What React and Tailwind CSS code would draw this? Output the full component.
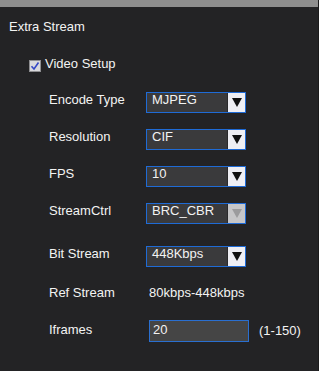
import React from "react";

function Arrow({ disabled }) {
  return (
    <div
      className={`w-[18px] h-full flex items-center justify-center border-l border-[#2a2a2c] ${
        disabled ? "bg-[#c6c6c8]" : "bg-[#efeff4]"
      }`}
    >
      <svg width="10" height="9" viewBox="0 0 10 9">
        <path d="M0 0 L10 0 L5 9 Z" fill={disabled ? "#9b9b9d" : "#111111"} />
      </svg>
    </div>
  );
}

function Select({ value, disabled }) {
  return (
    <div className="w-[100px] h-[21px] flex border border-[#1f6bd6] bg-[#3a3a3c]">
      <div className="flex-1 pl-[5px] leading-[14px]">{value}</div>
      <Arrow disabled={disabled} />
    </div>
  );
}

function Row({ label, height = "h-[37px]", children }) {
  return (
    <div className={`flex items-start ${height}`}>
      <div className="w-[97px]">{label}</div>
      {children}
    </div>
  );
}

export default function App() {
  return (
    <div className="w-[319px] h-[371px] bg-[#232325] border-r border-[#1a1a1b] font-['Liberation_Sans',Arial,sans-serif] text-[13px] leading-4 text-[#f3f3f3] overflow-hidden">
      {/* top bar */}
      <div className="h-[7px] bg-[#8e8e8e]" />

      <div className="pl-[9px] pt-[12px]">Extra Stream</div>

      {/* Video setup checkbox */}
      <div className="flex items-start pl-[29px] mt-[21px]">
        <svg width="12" height="12" viewBox="0 0 12 12" className="mt-[4px]">
          <rect x="0.5" y="0.5" width="11" height="11" fill="#d9d9dc" stroke="#8d8d90" />
          <path d="M2.5 6.2 L5 9 L9.5 2.5" fill="none" stroke="#3447c4" strokeWidth="1.6" />
        </svg>
        <span className="ml-[4px]">Video Setup</span>
      </div>

      <div className="pl-[49px] mt-[20px]">
        <Row label="Encode Type">
          <Select value="MJPEG" />
        </Row>
        <Row label="Resolution">
          <Select value="CIF" />
        </Row>
        <Row label="FPS">
          <Select value="10" />
        </Row>
        <Row label="StreamCtrl" height="h-[43px]">
          <Select value="BRC_CBR" disabled />
        </Row>
        <Row label="Bit Stream">
          <Select value="448Kbps" />
        </Row>
        <div className="flex items-start h-[37px] pt-[2px]">
          <div className="w-[100px]">Ref Stream</div>
          <div>80kbps-448kbps</div>
        </div>
        <div className="flex items-start h-[37px]">
          <div className="w-[100px] pt-[2px]">Iframes</div>
          <div className="w-[100px] h-[22px] border border-[#2a6fd0] bg-[#454545] pl-[3px] pt-[1px] leading-[16px]">
            20
          </div>
          <div className="ml-[10px] pt-[3px]">(1-150)</div>
        </div>
      </div>
    </div>
  );
}
